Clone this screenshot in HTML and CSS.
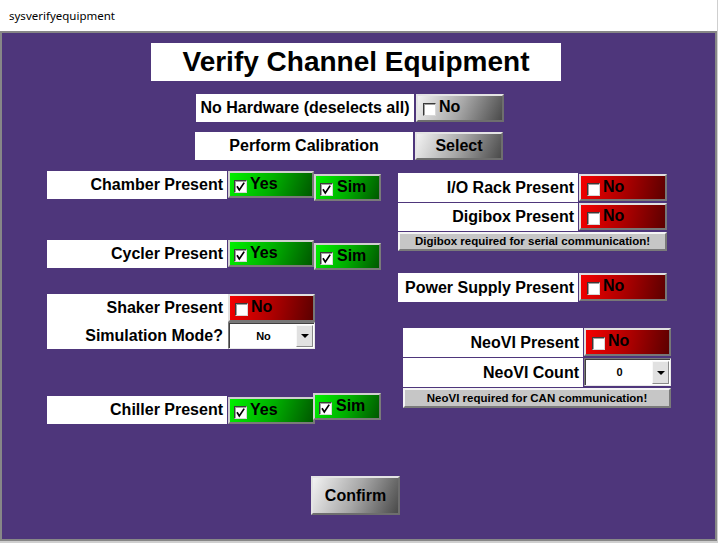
FILE: index.html
```html
<!DOCTYPE html>
<html>
<head>
<meta charset="utf-8">
<title>sysverifyequipment</title>
<link rel="stylesheet" href="styles.css">
</head>
<body>
<div class="window">
  <div class="titlebar">sysverifyequipment</div>
  <div class="client">
    <div class="title">Verify Channel Equipment</div>

    <div class="hrow hrow-nohw">
      <div class="hlbl">No Hardware (deselects all)</div>
      <div class="btn gray hbtn"><span class="cb"></span><span class="bt">No</span></div>
    </div>
    <div class="hrow hrow-cal">
      <div class="hlbl">Perform Calibration</div>
      <div class="btn gray hbtn center"><span class="bt">Select</span></div>
    </div>

    <div class="cols">
      <div class="lcol">
        <div class="erow">
          <div class="lbl">Chamber Present</div>
          <div class="btn green yes"><span class="cb"><svg viewBox="0 0 11 11"><path d="M2 5.2 L4.3 9 L9.2 1.6"/></svg></span><span class="bt">Yes</span></div>
          <div class="btn green sim"><span class="cb"><svg viewBox="0 0 11 11"><path d="M2 5.2 L4.3 9 L9.2 1.6"/></svg></span><span class="bt">Sim</span></div>
        </div>
        <div class="erow cycler">
          <div class="lbl">Cycler Present</div>
          <div class="btn green yes"><span class="cb"><svg viewBox="0 0 11 11"><path d="M2 5.2 L4.3 9 L9.2 1.6"/></svg></span><span class="bt">Yes</span></div>
          <div class="btn green sim"><span class="cb"><svg viewBox="0 0 11 11"><path d="M2 5.2 L4.3 9 L9.2 1.6"/></svg></span><span class="bt">Sim</span></div>
        </div>
        <div class="shaker">
          <div class="slbl">
            <div class="sline s1">Shaker Present</div>
            <div class="sline s2">Simulation Mode?</div>
          </div>
          <div class="sctl">
            <div class="btn red sbtn"><span class="cb"></span><span class="bt">No</span></div>
            <div class="dd sdd"><span class="ddv">No</span><span class="dda"><span class="tri"></span></span></div>
          </div>
        </div>
        <div class="erow chiller">
          <div class="lbl">Chiller Present</div>
          <div class="btn green yes"><span class="cb"><svg viewBox="0 0 11 11"><path d="M2 5.2 L4.3 9 L9.2 1.6"/></svg></span><span class="bt">Yes</span></div>
          <div class="btn green sim"><span class="cb"><svg viewBox="0 0 11 11"><path d="M2 5.2 L4.3 9 L9.2 1.6"/></svg></span><span class="bt">Sim</span></div>
        </div>
      </div>

      <div class="rcol">
        <div class="rrow io">
          <div class="rlbl tall">I/O Rack Present</div>
          <div class="btn red rbtn"><span class="cb"></span><span class="bt">No</span></div>
        </div>
        <div class="rrow digi">
          <div class="rlbl">Digibox Present</div>
          <div class="btn red rbtn"><span class="cb"></span><span class="bt">No</span></div>
        </div>
        <div class="notice n1">Digibox required for serial communication!</div>

        <div class="rrow power">
          <div class="rlbl tall">Power Supply Present</div>
          <div class="btn red rbtn pbtn"><span class="cb"></span><span class="bt">No</span></div>
        </div>

        <div class="neo">
          <div class="rrow">
            <div class="rlbl tall">NeoVI Present</div>
            <div class="btn red rbtn nbtn"><span class="cb"></span><span class="bt">No</span></div>
          </div>
          <div class="rrow count">
            <div class="rlbl tall">NeoVI Count</div>
            <div class="dd ndd"><span class="ddv">0</span><span class="dda"><span class="tri"></span></span></div>
          </div>
          <div class="notice n2">NeoVI required for CAN communication!</div>
        </div>
      </div>
    </div>

    <div class="btn gray confirm center"><span class="bt">Confirm</span></div>
  </div>
</div>
</body>
</html>
```

FILE: styles.css
```css
* { box-sizing: border-box; }
html, body { margin: 0; padding: 0; }
body {
  width: 718px;
  height: 543px;
  overflow: hidden;
  background: #cfcfcf;
  font-family: "Liberation Sans", Arial, sans-serif;
  color: #000;
}
.window {
  width: 717px;
  height: 541px;
  display: flex;
  flex-direction: column;
}
.titlebar {
  height: 31px;
  background: #fff;
  font-family: "Noto Sans", "Liberation Sans", sans-serif;
  font-size: 11.5px;
  line-height: 31px;
  padding-left: 9px;
  color: #000;
}
.client {
  flex: 1;
  background: #4e367b;
  border: 2px solid #878787;
}
.title {
  margin: 10px 0 0 149px;
  width: 410px;
  height: 38px;
  background: #fff;
  font-size: 28px;
  font-weight: bold;
  line-height: 38px;
  text-align: center;
}
.hrow { display: flex; gap: 2px; }
.hrow-nohw { margin: 13px 0 0 194px; }
.hrow-cal { margin: 10px 0 0 193px; }
.hlbl {
  width: 218px;
  height: 28px;
  background: #fff;
  font-size: 16px;
  font-weight: bold;
  line-height: 28px;
  text-align: center;
}
.hbtn { width: 88px; height: 28px; }

/* generic button */
.btn {
  display: flex;
  align-items: center;
  padding-left: 5px;
  border: 2px solid;
  border-color: #e4e4e4 #6e6e6e #6e6e6e #e4e4e4;
  font-weight: bold;
  font-size: 16px;
}
.btn.center { justify-content: center; padding-left: 0; }
.gray { background: linear-gradient(115deg, #f2f2f2 0%, #a8a8a8 50%, #4a4a4a 100%); }
.green { background: linear-gradient(110deg, #00f000 0%, #00b000 50%, #005800 100%); border-color: #d0d0d0 #7a7a7a #7a7a7a #d0d0d0; }
.red { background: linear-gradient(100deg, #f40000 0%, #b00000 50%, #5c0000 100%); border-color: #e0e0e0 #777 #777 #e0e0e0; }
.bt { margin-left: 3px; margin-top: -2px; }
.center .bt { margin-left: 0; margin-top: 0; }

.cb {
  width: 13px;
  height: 13px;
  margin-top: 3px;
  background: #fff;
  border-style: solid;
  border-width: 1px;
  border-color: #3a3a3a #d8d8d8 #d8d8d8 #3a3a3a;
  box-shadow: inset 1px 1px 0 #a0a0a0;
  display: flex;
  align-items: center;
  justify-content: center;
  flex: none;
}
.cb svg { width: 11px; height: 11px; display: block; }
.cb path { fill: none; stroke: #000; stroke-width: 1.7; }

/* columns */
.cols { display: flex; align-items: flex-start; margin-top: 11px; }
.lcol { margin-left: 45px; width: 334px; }
.rcol { margin-left: 17px; margin-top: 2px; }

.erow { display: flex; align-items: flex-start; }
.lbl {
  width: 180px;
  height: 28px;
  background: #fff;
  font-size: 16px;
  font-weight: bold;
  line-height: 28px;
  text-align: right;
  padding-right: 4px;
}
.yes { margin-left: 1px; width: 86px; height: 27px; padding-left: 4px; }
.sim { width: 67px; height: 27px; margin-top: 3px; padding-left: 4px; }
.sim .bt { margin-left: 4px; }
.yes .bt { margin-left: 3px; }
.cycler { margin-top: 39px; }

.shaker { display: flex; margin-top: 24px; }
.slbl { width: 181px; height: 55px; background: #fff; }
.sline {
  font-size: 16px;
  font-weight: bold;
  text-align: right;
  padding-right: 5px;
}
.s1 { height: 28px; line-height: 28px; }
.s2 { height: 27px; line-height: 27px; }
.sctl { display: flex; flex-direction: column; }
.sbtn { width: 87px; height: 28px; }

.chiller { margin-top: 47px; }
.chiller .yes { width: 87px; margin-top: 1px; }
.chiller .sim { width: 68px; margin-top: -3px; margin-left: -2px; }

/* dropdown */
.dd {
  display: flex;
  width: 87px;
  height: 27px;
  background: #fff;
  border-style: solid;
  border-width: 1px;
  border-color: #7a7a7a #e8e8e8 #e8e8e8 #7a7a7a;
  box-shadow: inset 1px 1px 0 #404040;
  padding: 2px 1px 1px 2px;
}
.ddv {
  flex: 1;
  text-align: center;
  font-size: 11px;
  font-weight: bold;
  line-height: 22px;
}
.dda {
  width: 17px;
  background: #e1e1e1;
  border: 1px solid;
  border-color: #f8f8f8 #8a8a8a #8a8a8a #f8f8f8;
  display: flex;
  align-items: center;
  justify-content: center;
}
.tri {
  width: 0;
  height: 0;
  border-left: 4px solid transparent;
  border-right: 4px solid transparent;
  border-top: 4px solid #000;
}

/* right column */
.rrow { display: flex; align-items: flex-start; }
.rlbl {
  width: 180px;
  height: 28px;
  background: #fff;
  font-size: 16px;
  font-weight: bold;
  line-height: 28px;
  text-align: right;
  padding-right: 4px;
}
.rlbl.tall { height: 29px; line-height: 29px; }
.rbtn { margin-left: 1px; width: 88px; height: 27px; padding-left: 6px; }
.io .rbtn { margin-top: 1px; }
.digi { margin-top: 1px; }
.notice {
  background: #c6c6c6;
  border: 2px solid;
  border-color: #f4f4f4 #7a7a7a #7a7a7a #f4f4f4;
  font-size: 11.5px;
  font-weight: bold;
  text-align: center;
}
.n1 { margin-top: 1px; width: 269px; height: 19px; line-height: 15px; }
.power { margin-top: 22px; }
.pbtn { height: 28px; }
.neo { margin: 26px 0 0 5px; }
.nbtn { width: 87px; height: 28px; }
.count { margin-top: 1px; }
.ndd { margin-left: 1px; width: 87px; height: 28px; }
.n2 { margin-top: 1px; width: 268px; height: 20px; line-height: 16px; }

.confirm {
  margin: 52px 0 0 309px;
  width: 89px;
  height: 39px;
  font-size: 16px;
}
```
